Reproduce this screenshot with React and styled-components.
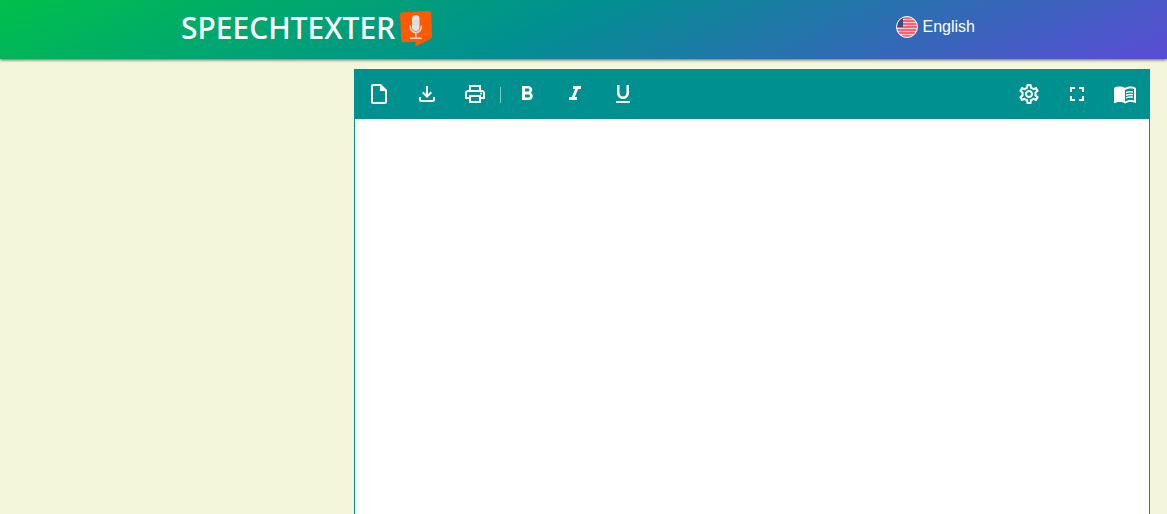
import styled, { createGlobalStyle } from "styled-components";
import {
  MdOutlineInsertDriveFile,
  MdOutlineFileDownload,
  MdOutlinePrint,
  MdFormatBold,
  MdFormatItalic,
  MdFormatUnderlined,
  MdOutlineSettings,
  MdFullscreen,
  MdMenuBook,
} from "react-icons/md";

const GlobalStyle = createGlobalStyle`
  *, *::before, *::after {
    box-sizing: border-box;
  }

  body {
    margin: 0;
    background-color: #f4f6dc;
    font-family: "Liberation Sans", Arial, sans-serif;
    font-size: 16px;
  }
`;

const Page = styled.div`
  display: flex;
  flex-direction: column;
  min-height: 100vh;
`;

const Header = styled.header`
  display: flex;
  justify-content: space-between;
  align-items: flex-start;
  height: 59px;
  padding: 0 192px 0 181px;
  color: #fff;
  background: linear-gradient(155deg, #00c04b, #009090 46%, #5b4bd5);
  box-shadow: 0 1px 3px rgba(0, 0, 0, 0.6);

  @media (max-width: 900px) {
    padding: 0 16px;
  }
`;

const Logo = styled.a`
  display: flex;
  align-items: center;
  gap: 4px;
  height: 56px;
  color: inherit;
  font-family: "Noto Sans", sans-serif;
  font-size: 30px;
  font-weight: 500;
  line-height: 54px;
  text-decoration: none;

  svg {
    margin-top: 2px;
  }
`;

const LanguageButton = styled.button`
  display: flex;
  align-items: center;
  gap: 5px;
  height: 54px;
  padding: 0;
  border: none;
  background: none;
  color: inherit;
  font: inherit;
  cursor: pointer;
`;

const Main = styled.main`
  display: grid;
  grid-template-columns: 337px minmax(0, 1fr);
  flex: 1;
  padding: 10px 17px 0;

  @media (max-width: 900px) {
    grid-template-columns: minmax(0, 1fr);
  }
`;

const Editor = styled.section`
  display: flex;
  flex-direction: column;
  grid-column: -2 / -1;
  border: 1px solid #009090;
  border-bottom: none;
  background-color: #fff;
`;

const Toolbar = styled.div`
  display: flex;
  align-items: flex-start;
  justify-content: space-between;
  height: 49px;
  background-color: #009090;
`;

const ToolGroup = styled.div`
  display: flex;
  align-items: center;
`;

const ToolButton = styled.button`
  display: flex;
  align-items: center;
  justify-content: center;
  width: 48px;
  height: 48px;
  padding: 0;
  border: none;
  background: none;
  color: #fff;
  font-size: 24px;
  cursor: pointer;

  &:hover {
    background-color: rgba(255, 255, 255, 0.15);
  }
`;

const Separator = styled.span`
  width: 1px;
  height: 16px;
  margin: 2px 2px 0 1px;
  background-color: #80c8c8;
`;

const TextArea = styled.textarea`
  flex: 1;
  width: 100%;
  padding: 16px;
  border: none;
  outline: none;
  resize: none;
  font: inherit;
`;

const fileTools = [
  { label: "New document", icon: MdOutlineInsertDriveFile },
  { label: "Download", icon: MdOutlineFileDownload },
  { label: "Print", icon: MdOutlinePrint },
];

const formatTools = [
  { label: "Bold", icon: MdFormatBold },
  { label: "Italic", icon: MdFormatItalic },
  { label: "Underline", icon: MdFormatUnderlined },
];

const viewTools = [
  { label: "Settings", icon: MdOutlineSettings },
  { label: "Fullscreen", icon: MdFullscreen },
  { label: "Dictionary", icon: MdMenuBook },
];

function Tools({ items }) {
  return items.map(({ label, icon: Icon }) => (
    <ToolButton key={label} type="button" aria-label={label}>
      <Icon />
    </ToolButton>
  ));
}

function MicBubble() {
  return (
    <svg width="34" height="38" viewBox="0 0 34 38" aria-hidden="true">
      <path
        d="M4 2.200 29 1q3-.2 3.200 2.500L33 26q.1 2-1.700 3L16.300 36.500l.5-4.500-12 .3q-2.300 0-2.500-2.600L1 5Q.8 2.300 4 2.200z"
        fill="#ff5a00"
      />
      <rect x="13" y="5" width="7.500" height="16" rx="3.700" fill="#e2e2e2" />
      <path d="M13 11h7.500M13 14h7.500" stroke="#cfcfcf" strokeWidth=".7" />
      <path
        d="M11.300 15.500v1.500a5.500 5.500 0 0 0 11 0v-1.500M16.800 22.500v5.500M11 28.300h11.600"
        fill="none"
        stroke="#d5d5d5"
        strokeWidth="1.600"
      />
    </svg>
  );
}

function Flag() {
  return (
    <svg width="22" height="22" viewBox="0 0 22 22" aria-hidden="true">
      <clipPath id="flag-circle">
        <circle cx="11" cy="11" r="10.200" />
      </clipPath>
      <g clipPath="url(#flag-circle)">
        <rect width="22" height="22" fill="#ffccd0" />
        <path
          d="M0 2h22M0 5h22M0 8h22M0 11h22M0 14h22M0 17h22M0 20h22"
          stroke="#ff3b50"
          strokeWidth="1.600"
        />
        <rect width="7" height="11" fill="#46467f" />
      </g>
      <circle
        cx="11"
        cy="11"
        r="10.500"
        fill="none"
        stroke="#fff"
        strokeWidth="1"
      />
    </svg>
  );
}

export default function App() {
  return (
    <>
      <GlobalStyle />
      <Page>
        <Header>
          <Logo href="/">
            <span>SPEECHTEXTER</span>
            <MicBubble />
          </Logo>
          <LanguageButton type="button">
            <Flag />
            <span>English</span>
          </LanguageButton>
        </Header>
        <Main>
          <Editor>
            <Toolbar>
              <ToolGroup>
                <Tools items={fileTools} />
                <Separator />
                <Tools items={formatTools} />
              </ToolGroup>
              <ToolGroup>
                <Tools items={viewTools} />
              </ToolGroup>
            </Toolbar>
            <TextArea aria-label="Document text" />
          </Editor>
        </Main>
      </Page>
    </>
  );
}
